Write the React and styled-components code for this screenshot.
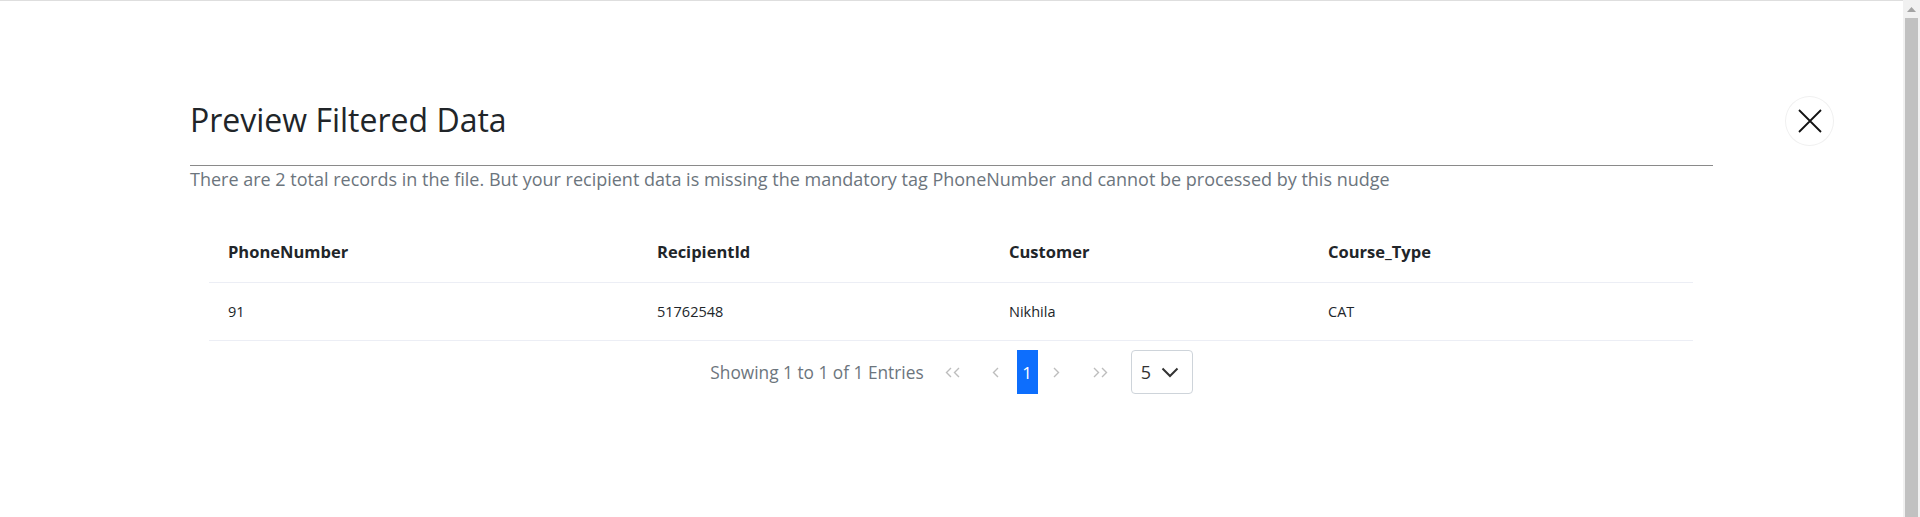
import React from "react";
import styled, { createGlobalStyle } from "styled-components";

const GlobalStyle = createGlobalStyle`
  html, body {
    margin: 0;
    height: 517px;
    overflow: hidden;
    background: #fff;
  }
  #root {
    height: 100%;
  }
`;

const Page = styled.div`
  display: flex;
  height: 517px;
  font-family: "Open Sans", "Noto Sans", sans-serif;
`;

const Main = styled.div`
  flex: 1;
  display: flex;
  border-top: 1px solid #dedede;
  padding-left: 190px;
`;

const Content = styled.div`
  flex: 1;
  padding-top: 100px;
  display: flex;
  flex-direction: column;
`;

const Side = styled.div`
  width: 190px;
  padding-left: 72px;
  padding-top: 95px;
  box-sizing: border-box;
`;

const CloseButton = styled.button`
  width: 49px;
  height: 50px;
  border-radius: 50%;
  border: 1px solid #f0f0f0;
  background: #fff;
  display: flex;
  align-items: center;
  justify-content: center;
  padding: 0;
  cursor: pointer;
`;

const Title = styled.h4`
  margin: 0;
  font-size: 32px;
  line-height: 38px;
  font-weight: 400;
  color: #212529;
`;

const Divider = styled.div`
  height: 1px;
  background: #8a8a8a;
  margin-top: 26px;
`;

const Description = styled.p`
  margin: 0;
  font-size: 18px;
  line-height: 26px;
  color: #6c757d;
`;

const Table = styled.div`
  margin: 33px 20px 0 19px;
  display: grid;
  grid-template-columns: 429px 352px 319px 1fr;
`;

const Row = styled.div`
  display: contents;
`;

const Cell = styled.div`
  height: 58px;
  box-sizing: border-box;
  border-bottom: 1px solid #eceef5;
  padding-left: 19px;
  padding-bottom: ${(p) => (p.$head ? "5px" : "0")};
  display: flex;
  align-items: center;
  color: #212529;
  font-size: ${(p) => (p.$head ? "16.5px" : "14.5px")};
  font-weight: ${(p) => (p.$head ? 700 : 400)};
`;

const Pagination = styled.div`
  margin-top: 9px;
  display: flex;
  justify-content: center;
  align-items: center;
  height: 44px;
`;

const Showing = styled.span`
  font-size: 17.3px;
  color: #6c757d;
  margin-right: 7px;
`;

const PageButton = styled.span`
  width: ${(p) => p.$w}px;
  height: 44px;
  display: flex;
  align-items: center;
  justify-content: center;
  font-size: 17px;
  color: #fff;
  background: ${(p) => (p.$active ? "#0d6efd" : "transparent")};
`;

const SizeSelect = styled.div`
  margin-left: 5px;
  width: 62px;
  height: 44px;
  box-sizing: border-box;
  border: 1px solid #ced4da;
  border-radius: 4px;
  display: flex;
  align-items: center;
  justify-content: space-between;
  padding: 0 13px 0 9px;
  font-size: 18px;
  color: #333;
`;

const Scrollbar = styled.div`
  width: 17px;
  background: #f1f1f1;
  display: flex;
  flex-direction: column;
  align-items: center;
`;

const ScrollArrow = styled.div`
  height: 18px;
  display: flex;
  align-items: center;
  justify-content: center;
`;

const ScrollThumb = styled.div`
  flex: 1;
  width: 13px;
  background: #c1c1c1;
`;

const Chevron = ({ dir = "left", double = false }) => {
  const w = double ? 15 : 7;
  const one = dir === "left" ? "6,1 1.5,5.5 6,10" : "1,1 5.5,5.5 1,10";
  return (
    <svg width={w} height="11" viewBox={`0 0 ${w} 11`}>
      <polyline points={one} fill="none" stroke="#bdbdbd" strokeWidth="1.4" />
      {double && (
        <polyline
          points={one}
          transform="translate(8 0)"
          fill="none"
          stroke="#bdbdbd"
          strokeWidth="1.4"
        />
      )}
    </svg>
  );
};

const columns = ["PhoneNumber", "RecipientId", "Customer", "Course_Type"];
const rows = [["91", "51762548", "Nikhila", "CAT"]];

export default function App() {
  return (
    <>
      <GlobalStyle />
      <Page>
        <Main>
          <Content>
            <Title>Preview Filtered Data</Title>
            <Divider />
            <Description>
              There are 2 total records in the file. But your recipient data is
              missing the mandatory tag PhoneNumber and cannot be processed by
              this nudge
            </Description>
            <Table>
              <Row>
                {columns.map((c) => (
                  <Cell $head key={c}>
                    {c}
                  </Cell>
                ))}
              </Row>
              {rows.map((r, i) => (
                <Row key={i}>
                  {r.map((v, j) => (
                    <Cell key={j}>{v}</Cell>
                  ))}
                </Row>
              ))}
            </Table>
            <Pagination>
              <Showing>Showing 1 to 1 of 1 Entries</Showing>
              <PageButton $w={44}>
                <Chevron double />
              </PageButton>
              <PageButton $w={42}>
                <Chevron />
              </PageButton>
              <PageButton $w={21} $active>
                1
              </PageButton>
              <PageButton $w={38}>
                <Chevron dir="right" />
              </PageButton>
              <PageButton $w={50}>
                <Chevron dir="right" double />
              </PageButton>
              <SizeSelect>
                5
                <svg width="18" height="11" viewBox="0 0 18 11">
                  <polyline
                    points="1.5,1.5 9,9 16.5,1.5"
                    fill="none"
                    stroke="#333"
                    strokeWidth="2"
                  />
                </svg>
              </SizeSelect>
            </Pagination>
          </Content>
          <Side>
            <CloseButton aria-label="Close">
              <svg width="24" height="24" viewBox="0 0 24 24">
                <path
                  d="M1 1 L23 23 M23 1 L1 23"
                  stroke="#111"
                  strokeWidth="1.8"
                  fill="none"
                />
              </svg>
            </CloseButton>
          </Side>
        </Main>
        <Scrollbar>
          <ScrollArrow>
            <svg width="9" height="5" viewBox="0 0 9 5">
              <polygon points="0,5 4.5,0 9,5" fill="#a3a3a3" />
            </svg>
          </ScrollArrow>
          <ScrollThumb />
        </Scrollbar>
      </Page>
    </>
  );
}
